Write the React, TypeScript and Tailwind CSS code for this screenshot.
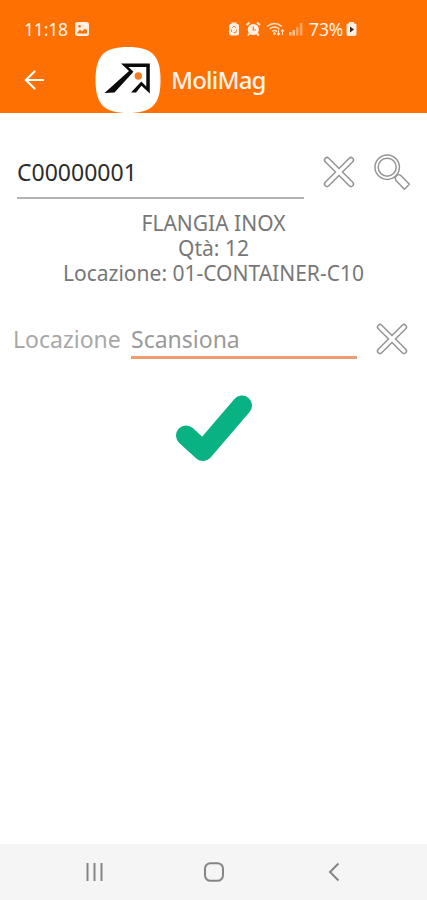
import type { ReactNode } from "react"

const ClearIcon = () => (
    <svg width="32" height="32" viewBox="0 0 32 32" fill="none" strokeLinecap="round">
        <path d="M4 4L28 28M28 4L4 28" stroke="#949494" strokeWidth="6.4" />
        <path d="M4 4L28 28M28 4L4 28" stroke="#fff" strokeWidth="3.4" />
    </svg>
)

const SearchIcon = () => (
    <svg width="37" height="37" viewBox="0 0 37 37" fill="none" stroke="#949494" strokeWidth="1.5">
        <path d="M21 23.4L24 20.4L26.800 21.400L35.400 30.200L30.400 35.200L22 26.400Z" fill="#fff" strokeLinejoin="round" />
        <circle cx="13.200" cy="13.200" r="12.200" fill="#fff" />
        <circle cx="13.200" cy="13.200" r="9" />
    </svg>
)

const AppLogo = () => (
    <svg width="66" height="66" viewBox="0 0 66 66">
        <path d="M33 0C57 0 65.5 8.5 65.5 33S57 66 33 66S.5 57.500 .5 33S9 0 33 0Z" fill="#fff" />
        <path d="M26 16.500H54.800V46.500L46.500 38.800L41 45.500H36L46.300 34.500L51.300 39.500V20H33.500L38.500 24.700L19.500 45.500L9.500 46L34 24Z" fill="#0b0b0b" />
        <circle cx="43.300" cy="29" r="3.700" fill="#f37a20" />
    </svg>
)

const StatusIcons = () => (
    <svg width="76" height="16" viewBox="0 0 76 16" fill="#ffeee2">
        {/* risparmio batteria */}
        <path d="M3.500 1.500H8.500V3H9.500Q11 3 11 4.500V12.500Q11 14.500 9 14.500H3Q1 14.500 1 12.500V4.500Q1 3 2.500 3H3.500Z" />
        <path d="M4 7L6 5L8 7M8.500 8.500L8 11.500H5.500M3.500 11L3.600 8.500" fill="none" stroke="#ff8b3c" strokeWidth="1" />
        {/* sveglia */}
        <circle cx="25.300" cy="8.500" r="5.600" />
        <path d="M18.700 4L21.500 1.500M29 1.500L32 4M21.500 12.500L20 14.500M29 12.500L30.800 14.500" stroke="#ffeee2" strokeWidth="2" />
        <path d="M25.300 5.500V9H28" fill="none" stroke="#ff7a1a" strokeWidth="1.200" />
        {/* wifi */}
        <g fill="none" stroke="#ffe1cb" strokeWidth="1.500">
            <path d="M39 5.500Q46.500-.5 54 5.500M41.500 8Q46.500 4 51.500 8M44 10.500Q46.500 8.500 49 10.500" />
            <path d="M50.500 8.500V14M49 12.500L50.500 14L52 12.500M54.500 14V8.800M53 10.300L54.500 8.800L56 10.300" strokeWidth="1.100" />
        </g>
        <circle cx="46.500" cy="12.500" r="1.300" />
        {/* segnale */}
        <path d="M61 11H63.500V14.500H61ZM64.500 9H67V14.500H64.500Z" opacity=".7" />
        <path d="M68 6H70.500V14.500H68ZM71.700 2H74.500V14.500H71.700Z" opacity=".4" />
    </svg>
)

const FieldLine = ({ className, children }: { className: string; children: ReactNode }) => (
    <div className={`flex items-center whitespace-nowrap ${className}`}>{children}</div>
)

export default function App() {
    return (
        <div className="w-full h-[900px] flex flex-col bg-white overflow-hidden font-['Noto_Sans',sans-serif]">
            <header className="h-[113px] shrink-0 bg-[#ff7003] text-[#fff3ea]">
                {/* barra di stato */}
                <div className="h-[47px] pt-[11px] flex items-center pl-6 text-[17.5px] whitespace-nowrap">
                    <span className="w-[44px] tracking-[-0.15px]">11:18</span>
                    <svg className="ml-[7px]" width="14" height="14" viewBox="0 0 14 14">
                        <rect width="14" height="14" rx="2.500" fill="#ffeee2" />
                        <path d="M2 11L5 7.500L7 9.500L10 6.500L12 8.500V11.500H2Z" fill="#ff7003" />
                        <circle cx="4.500" cy="4.300" r="1.300" fill="#ff7003" />
                    </svg>
                    <div className="ml-[139px]"><StatusIcons /></div>
                    <span className="ml-[5px] w-[35px] tracking-[-0.1px]">73%</span>
                    <svg className="ml-[2px]" width="11" height="14" viewBox="0 0 11 14">
                        <path d="M3 0H8V1.500H9Q10.500 1.500 10.500 3V12Q10.500 14 8.500 14H2.500Q.5 14 .5 12V3Q.5 1.500 2 1.500H3Z" fill="#ffeee2" />
                        <path d="M4 4.500L8 7.500L4 10.500Z" fill="#3c2a20" />
                    </svg>
                </div>
                <div className="h-[66px] flex items-center pl-6">
                    <svg width="20" height="20" viewBox="0 0 20 20" fill="none" stroke="#fff" strokeWidth="2.200" strokeLinecap="round" strokeLinejoin="round">
                        <path d="M10.500 1.500L1.800 10L10.500 18.500M2 10H19" />
                    </svg>
                    <div className="ml-[51px]"><AppLogo /></div>
                    <h1 className="ml-[10px] text-[24px] leading-8 font-medium tracking-[-0.8px]">MoliMag</h1>
                </div>
            </header>

            <main className="flex-1">
                <div className="mt-[41px] flex items-start">
                    <FieldLine className="ml-[17px] w-[287px] h-[45px] pb-[6px] border-b-2 border-[#b4b4b4] text-[23px] text-[#2c2c2c]">
                        C00000001
                    </FieldLine>
                    <button className="ml-[19px] mt-[2px]"><ClearIcon /></button>
                    <button className="ml-[19px]"><SearchIcon /></button>
                </div>

                <div className="mt-[12px] text-center text-[21px] leading-[25px] text-[#777] whitespace-nowrap">
                    <p>FLANGIA INOX</p>
                    <p>Qtà: 12</p>
                    <p>Locazione: 01-CONTAINER-C10</p>
                </div>

                <div className="mt-[37px] flex items-start">
                    <span className="ml-[13px] w-[118px] h-[32px] leading-[32px] text-[23px] text-[#a8a8a8]">Locazione</span>
                    <FieldLine className="w-[226px] h-[36px] pb-[1px] border-b-[3px] border-[#ee9c72] text-[23px] text-[#9a9a9a]">
                        Scansiona
                    </FieldLine>
                    <button className="ml-[19px]"><ClearIcon /></button>
                </div>

                <div className="mt-[36px] flex justify-center">
                    <svg width="78" height="68" viewBox="0 0 78 68" fill="none" stroke="#09b282" strokeWidth="20" strokeLinecap="round" strokeLinejoin="round">
                        <path d="M11 40.500L28 56L67 10.500" />
                    </svg>
                </div>
            </main>

            {/* barra di navigazione */}
            <nav className="h-14 shrink-0 bg-[#f5f5f5] flex items-center pl-[85px] text-[#858585]">
                <svg width="19" height="20" viewBox="0 0 19 20" stroke="currentColor" strokeWidth="2">
                    <path d="M2.500 1V19M9.500 1V19M16.500 1V19" />
                </svg>
                <svg className="ml-[100px]" width="20" height="20" viewBox="0 0 20 20" fill="none" stroke="currentColor" strokeWidth="2">
                    <rect x="1" y="1.200" width="18" height="17.600" rx="5.500" />
                </svg>
                <svg className="ml-[104px]" width="12" height="20" viewBox="0 0 12 20" fill="none" stroke="currentColor" strokeWidth="2">
                    <path d="M10.500 1.500L2 10L10.500 18.500" />
                </svg>
            </nav>
        </div>
    )
}
